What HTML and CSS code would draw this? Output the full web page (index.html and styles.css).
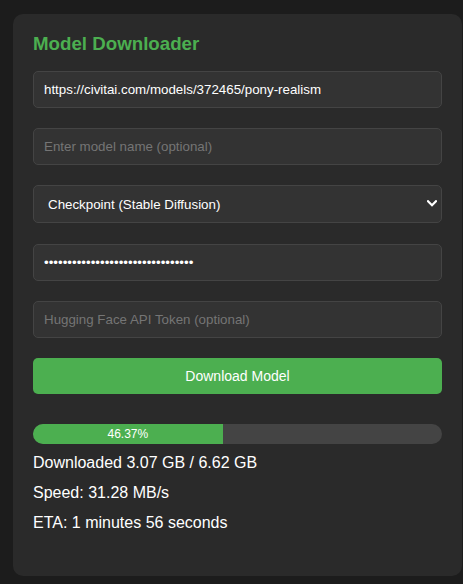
FILE: index.html
```html
<!DOCTYPE html>
<html lang="en">
<head>
<meta charset="utf-8">
<title>Model Downloader</title>
<link rel="stylesheet" href="styles.css">
</head>
<body>
<div class="card">
  <h3 class="title">Model Downloader</h3>
  <div class="form">
    <input class="field" type="text" value="https://civitai.com/models/372465/pony-realism">
    <input class="field" type="text" placeholder="Enter model name (optional)">
    <div class="select-wrap">
      <select class="select">
        <option>Checkpoint (Stable Diffusion)</option>
      </select>
      <svg class="chevron" width="10" height="7" viewBox="0 0 10 7"><path d="M1 1.2 L5 5.2 L9 1.2" fill="none" stroke="#fff" stroke-width="2.2" stroke-linecap="square" stroke-linejoin="miter"/></svg>
    </div>
    <input class="field" type="text" value="••••••••••••••••••••••••••••••••">
    <input class="field" type="text" placeholder="Hugging Face API Token (optional)">
    <button class="btn">Download Model</button>
  </div>
  <div class="progress">
    <div class="progress-fill" style="width:46.37%">46.37%</div>
  </div>
  <div class="stats">
    <div class="stat">Downloaded 3.07 GB / 6.62 GB</div>
    <div class="stat">Speed: 31.28 MB/s</div>
    <div class="stat">ETA: 1 minutes 56 seconds</div>
  </div>
</div>
</body>
</html>
```
FILE: styles.css
```css
* { box-sizing: border-box; }
html, body {
  margin: 0;
  background: #1c1c1c;
  font-family: "Liberation Sans", Arial, Helvetica, sans-serif;
  color: #fff;
}
.card {
  margin: 14px 0 0 13px;
  width: 449px;
  background: #2a2a2a;
  border-radius: 10px;
  padding: 19px 20px 43px 20px;
}
.title {
  margin: 0 0 16px 0;
  font-size: 18.72px;
  line-height: 22px;
  font-weight: bold;
  color: #4caf50;
}
.form {
  display: flex;
  flex-direction: column;
  gap: 20px;
}
.field {
  display: block;
  width: 100%;
  height: 37px;
  padding: 0 10px;
  background: #333333;
  border: 1px solid #444444;
  border-radius: 5px;
  color: #fff;
  font-family: "Liberation Sans", Arial, Helvetica, sans-serif;
  font-size: 13.33px;
  outline: none;
}
.field::placeholder { color: #757575; }
.select-wrap {
  position: relative;
  margin-bottom: 1px;
}
.select {
  display: block;
  width: 100%;
  height: 38px;
  padding: 0 30px 0 14px;
  background: #333333;
  border: 1px solid #444444;
  border-radius: 5px;
  color: #fff;
  font-family: "Liberation Sans", Arial, Helvetica, sans-serif;
  font-size: 13.33px;
  -webkit-appearance: none;
  appearance: none;
  outline: none;
}
.chevron {
  position: absolute;
  right: 5px;
  top: 15px;
  width: 10px;
  height: 7px;
  right: 5px;
}
.select-wrap .chevron { right: 5px; left: auto; }
.btn {
  display: block;
  width: 100%;
  height: 36px;
  background: #4caf50;
  border: none;
  border-radius: 5px;
  color: #fff;
  font-family: "Liberation Sans", Arial, Helvetica, sans-serif;
  font-size: 14px;
  padding: 0;
}
.progress {
  margin-top: 30px;
  height: 20px;
  background: #444444;
  border-radius: 10px;
  overflow: hidden;
}
.progress-fill {
  height: 100%;
  background: #4caf50;
  color: #fff;
  font-size: 12px;
  line-height: 20px;
  text-align: center;
}
.stats {
  margin-top: 9px;
  display: flex;
  flex-direction: column;
  gap: 10px;
}
.stat {
  font-size: 16px;
  line-height: 20px;
}
```
